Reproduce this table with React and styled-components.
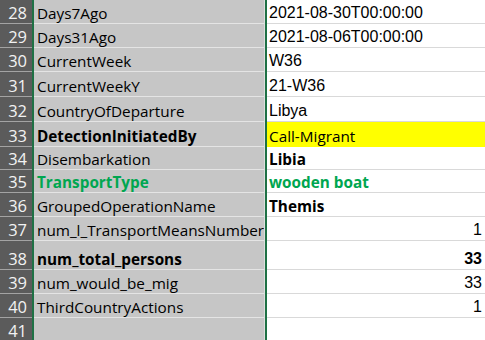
import React from 'react';
import styled, { createGlobalStyle } from 'styled-components';

const GlobalStyle = createGlobalStyle`
  html, body {
    margin: 0;
    padding: 0;
    background: #ffffff;
    overflow: hidden;
  }
`;

const excelGreen = '#1f7145';
const textGreen = '#00a650';
const uiFont = '"Open Sans", "Noto Sans", sans-serif';
const cellFont = '"Liberation Sans", Arial, sans-serif';

const rows = [
  { n: 28, h: 24, name: 'Days7Ago', value: '2021-08-30T00:00:00', font: 'arial' },
  { n: 29, h: 24, name: 'Days31Ago', value: '2021-08-06T00:00:00', font: 'arial' },
  { n: 30, h: 24, name: 'CurrentWeek', value: 'W36', font: 'arial' },
  { n: 31, h: 25, name: 'CurrentWeekY', value: '21-W36', font: 'arial' },
  { n: 32, h: 25, name: 'CountryOfDeparture', value: 'Libya', font: 'arial' },
  { n: 33, h: 25, name: 'DetectionInitiatedBy', nameBold: true, value: 'Call-Migrant', fill: '#ffff00' },
  { n: 34, h: 23, name: 'Disembarkation', value: 'Libia', bold: true },
  { n: 35, h: 23, name: 'TransportType', nameBold: true, nameColor: textGreen, value: 'wooden boat', bold: true, color: textGreen },
  { n: 36, h: 24, name: 'GroupedOperationName', value: 'Themis', bold: true },
  { n: 37, h: 24, name: 'num_l_TransportMeansNumber', value: '1', font: 'arial', right: true },
  { n: 38, h: 29, name: 'num_total_persons', nameBold: true, value: '33', font: 'arial', right: true, bold: true },
  { n: 39, h: 24, name: 'num_would_be_mig', value: '33', font: 'arial', right: true },
  { n: 40, h: 24, name: 'ThirdCountryActions', value: '1', font: 'arial', right: true },
  { n: 41, h: 24, name: '', value: '', last: true },
];

const Sheet = styled.div`
  display: flex;
  flex-direction: column;
  width: 485px;
  height: 340px;
  overflow: hidden;
`;

const Row = styled.div`
  display: grid;
  grid-template-columns: 34px 231px 1fr;
  height: ${p => p.$h}px;
  flex: none;
`;

const RowHeader = styled.div`
  display: flex;
  align-items: flex-end;
  justify-content: flex-end;
  padding: 0 5px 1px 0;
  background: #5b5b5b;
  color: #f2f2f2;
  border-right: 2px solid ${excelGreen};
  box-shadow: inset 0 -1px 0 ${p => (p.$last ? 'transparent' : '#a3a3a3')};
  font-family: ${uiFont};
  font-size: 16.5px;
  line-height: 20px;
`;

const NameCell = styled.div`
  display: flex;
  align-items: flex-end;
  padding: 0 0 1px 3px;
  background: #c6c6c6;
  border-right: 1px solid #dedede;
  box-shadow: inset 0 -1px 0 ${p => (p.$last ? 'transparent' : '#e4e4e4')};
  font-family: ${uiFont};
  font-size: 15.3px;
  line-height: 20px;
  font-weight: ${p => (p.$bold ? 700 : 400)};
  color: ${p => p.$color || '#000'};
  white-space: nowrap;
  overflow: hidden;
`;

const ValueCell = styled.div`
  display: flex;
  align-items: flex-end;
  justify-content: ${p => (p.$right ? 'flex-end' : 'flex-start')};
  padding: 0 3px 1px 2px;
  background: ${p => p.$fill || '#ffffff'};
  border-left: 2px solid ${excelGreen};
  box-shadow: inset 0 -1px 0 ${p => (p.$last ? 'transparent' : p.$fill ? 'transparent' : '#d9d9d9')};
  font-family: ${p => (p.$font === 'arial' ? cellFont : uiFont)};
  font-size: ${p => (p.$font === 'arial' ? '16px' : '15.3px')};
  line-height: 20px;
  font-weight: ${p => (p.$bold ? 700 : 400)};
  color: ${p => p.$color || '#000'};
  white-space: nowrap;
  overflow: hidden;
`;

export default function App() {
  return (
    <>
      <GlobalStyle />
      <Sheet>
        {rows.map(r => (
          <Row key={r.n} $h={r.h}>
            <RowHeader $last={r.last}>{r.n}</RowHeader>
            <NameCell $last={r.last} $bold={r.nameBold} $color={r.nameColor}>
              {r.name}
            </NameCell>
            <ValueCell
              $last={r.last}
              $fill={r.fill}
              $font={r.font}
              $right={r.right}
              $bold={r.bold}
              $color={r.color}
            >
              {r.value}
            </ValueCell>
          </Row>
        ))}
      </Sheet>
    </>
  );
}
